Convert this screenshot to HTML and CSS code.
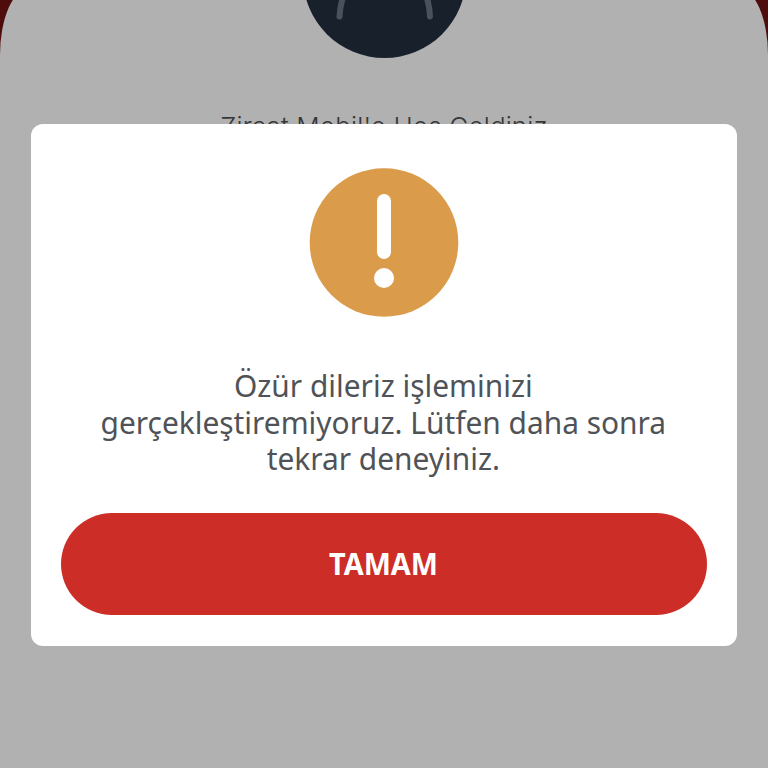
FILE: index.html
```html
<!DOCTYPE html>
<html lang="tr">
<head>
    <meta charset="UTF-8">
    <meta name="viewport" content="width=device-width, initial-scale=1.0">
    <title>Ziraat Mobil</title>
    <link rel="stylesheet" href="styles.css">
</head>
<body>

<!-- Login sheet -->
<div class="sheet">
    <svg class="avatar" width="166" height="166" viewBox="0 0 166 166">
        <circle cx="83.500" cy="84.500" r="81.500" fill="#18202b"/>
        <path d="M38.500 124.500C40 99 52 76 83.500 76S128 99 129 124.500" fill="none" stroke="#47525e" stroke-width="6" stroke-linecap="round"/>
    </svg>
    <p class="welcome">Ziraat Mobil'e Hoş Geldiniz</p>
</div>

<!-- Error dialog -->
<div class="overlay">
    <div class="dialog" role="alertdialog">
        <svg class="warning" width="150" height="150" viewBox="0 0 150 150">
            <circle cx="75" cy="75.500" r="74.300" fill="#da9b4b"/>
            <rect x="68" y="27" width="14" height="65" rx="7" fill="#fff"/>
            <circle cx="75" cy="111" r="10" fill="#fff"/>
        </svg>
        <p class="message">Özür dileriz işleminizi<br>gerçekleştiremiyoruz. Lütfen daha sonra<br>tekrar deneyiniz.</p>
        <button type="button" class="btn"><span class="btn-label">TAMAM</span></button>
    </div>
</div>

</body>
</html>
```
FILE: styles.css
```css
body {
    margin: 0;
    height: 768px;
    overflow: hidden;
    background-color: #4f0c0c;
    font-family: "Noto Sans", "Open Sans", sans-serif;
}

.sheet {
    display: flex;
    flex-direction: column;
    align-items: center;
    height: 790px;
    margin-top: -12px;
    background-color: #b1b1b1;
    border-radius: 30px 30px 0 0 / 67px 67px 0 0;
}

.avatar {
    flex: none;
    margin-top: -96px;
}

.welcome {
    margin: 51px 0 0;
    font-family: Inter, sans-serif;
    font-size: 26px;
    font-weight: 300;
    line-height: 36px;
    letter-spacing: 0.1px;
    color: #363738;
    white-space: nowrap;
}

.overlay {
    position: absolute;
    top: 0;
    left: 0;
    width: 768px;
    height: 768px;
    display: flex;
    justify-content: center;
    align-items: flex-start;
    overflow: hidden;
}

.dialog {
    box-sizing: border-box;
    display: flex;
    flex-direction: column;
    align-items: center;
    width: 706px;
    height: 522px;
    margin-top: 124px;
    padding: 43px 30px 31px;
    background: white;
    border-radius: 12px;
}

.warning {
    flex: none;
}

/* narrow the letterforms slightly */
.message {
    margin: 50px 0 0;
    font-size: 31px;
    line-height: 36.5px;
    color: #4f5357;
    text-align: center;
    white-space: nowrap;
    transform: translateX(-1px) scaleX(0.964);
}

.btn {
    width: 646px;
    height: 102px;
    margin-top: auto;
    padding: 0 0 2px;
    background-color: #cc2d26;
    color: white;
    border: none;
    border-radius: 51px;
    font-family: "Noto Sans", sans-serif;
    font-size: 31px;
    font-weight: bold;
    cursor: pointer;
}

.btn-label {
    display: inline-block;
    transform: scaleX(0.93);
}
```
